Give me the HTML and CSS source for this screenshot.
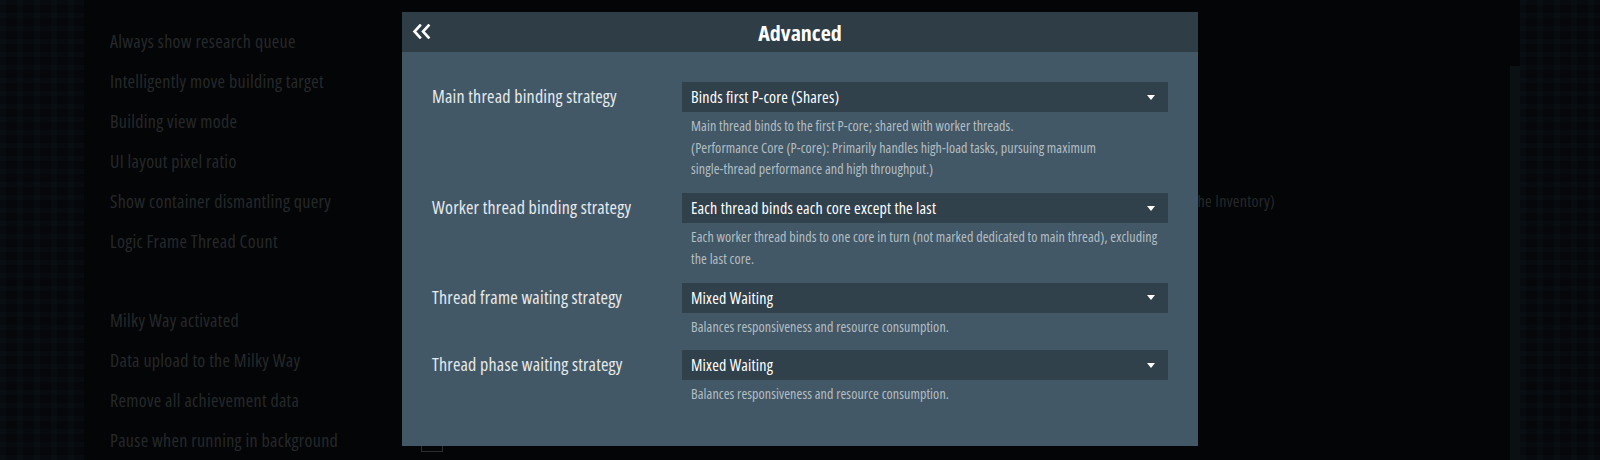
FILE: index.html
```html
<!DOCTYPE html>
<html lang="en">
<head>
<meta charset="utf-8">
<title>Settings - Advanced</title>
<link rel="stylesheet" href="styles.css">
</head>
<body>
<div class="screen">
  <div class="edge edge-left"></div>

  <div class="settings">
    <ul class="settings-list">
      <li class="setting">Always show research queue</li>
      <li class="setting">Intelligently move building target</li>
      <li class="setting">Building view mode</li>
      <li class="setting">UI layout pixel ratio</li>
      <li class="setting setting-wide"><span>Show container dismantling query</span><span class="setting-value">Only when dismantling items (Items go to the Inventory)</span></li>
      <li class="setting">Logic Frame Thread Count</li>
      <li class="setting setting-gap">Milky Way activated</li>
      <li class="setting">Data upload to the Milky Way</li>
      <li class="setting">Remove all achievement data</li>
      <li class="setting">Pause when running in background<span class="checkbox"></span></li>
    </ul>
  </div>

  <div class="scrollbar"></div>
  <div class="edge edge-right"></div>

  <section class="dialog">
    <header class="dialog-header">
      <button class="back" type="button" aria-label="Back">
        <svg width="20" height="15" viewBox="0 0 20 15">
          <path d="M8 1.5 L2.5 7.5 L8 13.5" fill="none" stroke="#ffffff" stroke-width="2.6" stroke-linecap="square"/>
          <path d="M16.5 1.5 L11 7.5 L16.5 13.5" fill="none" stroke="#ffffff" stroke-width="2.6" stroke-linecap="square"/>
        </svg>
      </button>
      <h1 class="dialog-title">Advanced</h1>
    </header>

    <div class="dialog-body">
      <div class="option">
        <div class="option-label">Main thread binding strategy</div>
        <div class="option-control">
          <div class="select"><span>Binds first P-core (Shares)</span><i class="caret"></i></div>
          <p class="option-desc">Main thread binds to the first P-core; shared with worker threads.<br>(Performance Core (P-core): Primarily handles high-load tasks, pursuing maximum<br>single-thread performance and high throughput.)</p>
        </div>
      </div>

      <div class="option">
        <div class="option-label">Worker thread binding strategy</div>
        <div class="option-control">
          <div class="select"><span>Each thread binds each core except the last</span><i class="caret"></i></div>
          <p class="option-desc">Each worker thread binds to one core in turn (not marked dedicated to main thread), excluding<br>the last core.</p>
        </div>
      </div>

      <div class="option">
        <div class="option-label">Thread frame waiting strategy</div>
        <div class="option-control">
          <div class="select"><span>Mixed Waiting</span><i class="caret"></i></div>
          <p class="option-desc">Balances responsiveness and resource consumption.</p>
        </div>
      </div>

      <div class="option">
        <div class="option-label">Thread phase waiting strategy</div>
        <div class="option-control">
          <div class="select"><span>Mixed Waiting</span><i class="caret"></i></div>
          <p class="option-desc">Balances responsiveness and resource consumption.</p>
        </div>
      </div>
    </div>
  </section>
</div>
</body>
</html>
```

FILE: styles.css
```css
* {
  box-sizing: border-box;
}

html, body {
  margin: 0;
  padding: 0;
}

body {
  width: 1600px;
  height: 460px;
  overflow: hidden;
  background: #040506;
  font-family: "Open Sans", "Roboto", sans-serif;
  font-stretch: 75%;
}

.screen {
  position: relative;
  width: 1600px;
  height: 460px;
  display: flex;
}

/* dim textured strips at the screen edges */
.edge {
  flex: none;
  height: 100%;
  background-color: #05070a;
  background-image:
    repeating-linear-gradient(90deg, rgba(16, 26, 32, 0.22) 0 6px, transparent 6px 17px),
    repeating-linear-gradient(0deg, rgba(16, 26, 32, 0.2) 0 5px, transparent 5px 13px);
}

.edge-left {
  width: 84px;
}

.edge-right {
  width: 80px;
}

/* settings page behind the dialog */
.settings {
  flex: 1;
  padding: 28px 0 0 26px;
}

.settings-list {
  list-style: none;
  margin: 0;
  padding: 0;
}

.setting {
  height: 40px;
  line-height: 26px;
  font-size: 18px;
  letter-spacing: 0.3px;
  color: #25292b;
  white-space: nowrap;
  display: flex;
}

.setting-wide {
  width: 1165px;
}

.setting-gap {
  margin-top: 39px;
}

.setting-value {
  margin-left: auto;
  font-size: 16px;
}

.checkbox {
  position: absolute;
  left: 421px;
  top: 430px;
  width: 22px;
  height: 22px;
  border: 1px solid #2b2f31;
}

.scrollbar {
  flex: none;
  width: 10px;
  margin-top: 66px;
  height: calc(100% - 66px);
  background: #0b1013;
}

/* modal dialog */
.dialog {
  position: absolute;
  left: 402px;
  top: 12px;
  width: 796px;
  height: 434px;
  background: #435866;
  display: flex;
  flex-direction: column;
}

.dialog-header {
  position: relative;
  height: 40px;
  flex: none;
  background: #2e3d46;
  display: flex;
  align-items: center;
  justify-content: center;
}

.back {
  position: absolute;
  left: 10px;
  top: 12px;
  padding: 0;
  margin: 0;
  border: 0;
  background: none;
  display: flex;
}

.dialog-title {
  margin: 0;
  font-size: 22px;
  font-weight: bold;
  color: #ffffff;
}

.dialog-body {
  padding: 30px 30px 0 30px;
  display: flex;
  flex-direction: column;
  gap: 13px;
}

.option {
  display: grid;
  grid-template-columns: 250px 486px;
}

.option-label {
  height: 30px;
  line-height: 28px;
  font-size: 18px;
  letter-spacing: 0.2px;
  color: #e6eaec;
  white-space: nowrap;
}

.select {
  height: 30px;
  background: #30414b;
  display: flex;
  align-items: center;
  justify-content: space-between;
  padding: 0 13px 0 9px;
  font-size: 16px;
  letter-spacing: 0.2px;
  color: #ffffff;
  white-space: nowrap;
}

.caret {
  width: 0;
  height: 0;
  border-left: 4.5px solid transparent;
  border-right: 4.5px solid transparent;
  border-top: 5px solid #ffffff;
}

.option-desc {
  margin: 3px 0 0 9px;
  font-size: 14px;
  letter-spacing: 0.1px;
  line-height: 21.7px;
  color: #b3bec4;
  white-space: nowrap;
}
```
